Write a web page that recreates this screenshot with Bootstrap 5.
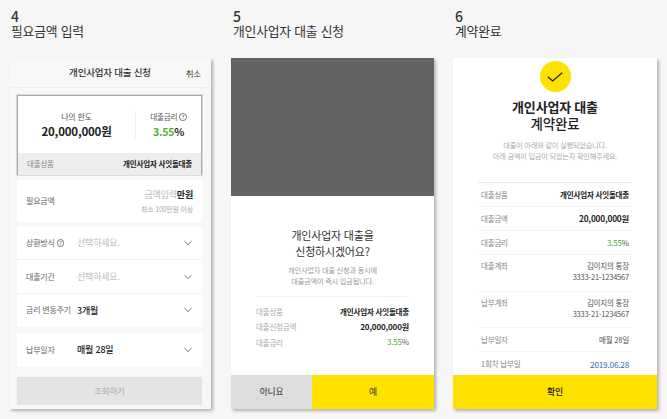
<!DOCTYPE html>
<html lang="ko">
<head>
<meta charset="utf-8">
<title>개인사업자 대출 신청</title>
<link href="https://cdn.jsdelivr.net/npm/bootstrap@5.3.0/dist/css/bootstrap.min.css" rel="stylesheet">
<style>
html,body{height:419px;overflow:hidden}
body{background:#f6f6f6;font-family:"Noto Sans CJK KR","Noto Sans",sans-serif;color:#333;letter-spacing:-.2px}
.stage{height:419px;padding:9px 10px 10px 9px;gap:20px}
.stage-col{width:203px;flex:none}
.stage-col:first-child{width:202px}
.stage-col:last-child{width:204px;margin-left:-1px}
.step-head{height:49px;font-size:12.8px;line-height:15px;padding-left:2px;color:#333}
.step-head b{font-weight:500;display:block;font-size:14px;line-height:14px}
.phone{height:351px;background:#fff;box-shadow:2px 2px 3px rgba(0,0,0,.28);overflow:hidden}
.phone-gray{background:#f7f7f7}
.top-bar{height:30px;border-bottom:1px solid #eee;font-size:9.5px;position:relative;justify-content:center;align-items:center;font-weight:500}
.top-cancel{position:absolute;right:10px;top:9px;font-size:8.5px;line-height:12px;font-weight:400}
.form-area{padding:7px 9px 0 8px}
.limit-box{height:80px;border:1px solid #a9a9a9;box-shadow:0 0 0 .5px #bbb;background:#fff;margin-bottom:5px}
.limit-top{height:57px;padding-top:14px;text-align:center}
.limit-a{width:118px;border-right:1px solid #eee;height:28px;font-size:8px;line-height:11px;color:#555;margin-top:1px}
.limit-b{flex:1;font-size:7.6px;line-height:11px;color:#555;margin-top:1px}
.limit-num{font-size:11.5px;font-weight:700;color:#222;line-height:17px;margin-top:1px}
.limit-rate{font-size:10.5px}
.limit-foot{height:22px;background:#ededed;font-size:7.5px;padding:0 9px;align-items:center;justify-content:space-between;color:#888}
.limit-foot b{color:#222;font-weight:700}
.green{color:#4fb02f}
.white-card{background:#fff;margin-bottom:5px;border-radius:1px}
.amount{height:42px;padding:0 9px;font-size:8px;color:#666;align-items:center;justify-content:space-between}
.amount-r{text-align:right;line-height:11px}
.amount-r div:first-child{font-size:9px;color:#bbb;line-height:14px}
.amount-r b{color:#222}
.amount-r div:last-child{font-size:7px;color:#aaa;line-height:11px;margin-top:2px}
.pick-group{margin-bottom:6px}
.pick{height:33.4px;padding:0 9px;align-items:center;font-size:8px;color:#666;border-bottom:1px solid #f2f2f2}
.pick:last-child{border-bottom:0}
.pick-label{width:51px;flex:none;white-space:nowrap}
.pick-val{flex:1;font-size:9px;color:#bbb}
.pick-val.on{color:#222;font-weight:500}
.chev{width:10px;height:6px;flex:none}
.qmark{display:inline-block;width:7.5px;height:7.5px;border:.7px solid #777;border-radius:50%;font-size:5.5px;line-height:6.5px;text-align:center;vertical-align:1px;letter-spacing:0}
.go-btn{height:28px;margin-top:10px;background:#e4e4e4;color:#aaa;font-size:8.5px;align-items:center;justify-content:center}
.dim{height:138px;background:#636363}
.ask{flex:1;padding-top:31px;text-align:center}
.ask-title{font-size:11px;line-height:16px;color:#333;font-weight:400}
.ask-sub{font-size:7.2px;line-height:11px;color:#999;margin-top:6px}
.ask-rows{margin:9px 25px 0;border-top:1px solid #f0f0f0;padding-top:7px;font-size:7.5px;color:#aaa}
.ask-row{height:15.3px;align-items:center;justify-content:space-between}
.ask-row b{color:#222;font-weight:700}
.ask-row span.val{color:#666;font-size:8px}
.money{font-size:8.1px}
.bottom-btns{height:34px;font-size:8.8px;color:#333;font-weight:400}
.btn-no{width:81px;background:#ddd;align-items:center;justify-content:center}
.btn-yes{flex:1;background:#ffe100;align-items:center;justify-content:center}
.tick{width:31px;height:31px;border-radius:50%;background:#ffe100;margin:3px auto 0;align-items:center;justify-content:center}
.done-title{font-size:13px;line-height:16px;text-align:center;margin-top:7px;font-weight:700;color:#222}
.done-title span{font-weight:500;display:block;font-size:13.5px}
.done-sub{font-size:7.2px;line-height:11px;color:#aaa;text-align:center;margin-top:9px}
.done-rows{margin:20px 25px 0 25px;border-top:1px solid #e6e6e6;font-size:7.5px;color:#888}
.done-row{justify-content:space-between;padding:0 3px;border-bottom:1px solid #f5f5f5;height:24px;align-items:center}
.done-row.tall{height:36.5px;align-items:flex-start;padding-top:5px;line-height:11px}
.done-row:last-child{border-bottom:0;height:24px}
.done-row b{color:#222;font-weight:700}
.done-row b.money{font-size:8.3px}
.done-row .val{color:#555;text-align:right}
.done-row .val.rate{font-size:8px}
.blue{color:#2a6cb0;font-size:8.2px}
.done-body{flex:1;overflow:hidden}
.ok-btn{height:34px;background:#ffe100;font-size:8.8px;font-weight:500;color:#222;align-items:center;justify-content:center}
</style>
</head>
<body>
<div class="stage d-flex">
  <div class="stage-col">
    <div class="step-head"><b>4</b>필요금액 입력</div>
    <div class="phone phone-gray">
      <div class="top-bar d-flex">개인사업자 대출 신청<span class="top-cancel">취소</span></div>
      <div class="form-area">
        <div class="limit-box">
          <div class="limit-top d-flex">
            <div class="limit-a">나의 한도<div class="limit-num">20,000,000원</div></div>
            <div class="limit-b">대출금리 <span class="qmark">?</span><div class="limit-num limit-rate"><span class="green">3.55</span>%</div></div>
          </div>
          <div class="limit-foot d-flex"><span>대출상품</span><b>개인사업자 사잇돌대출</b></div>
        </div>
        <div class="white-card amount d-flex">
          <span>필요금액</span>
          <div class="amount-r"><div>금액입력<b>만원</b></div><div>최소 100만원 이상</div></div>
        </div>
        <div class="white-card pick-group">
          <div class="pick d-flex"><span class="pick-label">상환방식 <span class="qmark">?</span></span><span class="pick-val">선택하세요.</span><svg class="chev" viewBox="0 0 10 6"><path d="M1.5 1.2 5 4.6l3.5-3.4" fill="none" stroke="#777" stroke-width="1"/></svg></div>
          <div class="pick d-flex"><span class="pick-label">대출기간</span><span class="pick-val">선택하세요.</span><svg class="chev" viewBox="0 0 10 6"><path d="M1.5 1.2 5 4.6l3.5-3.4" fill="none" stroke="#777" stroke-width="1"/></svg></div>
          <div class="pick d-flex"><span class="pick-label">금리 변동주기</span><span class="pick-val on">3개월</span><svg class="chev" viewBox="0 0 10 6"><path d="M1.5 1.2 5 4.6l3.5-3.4" fill="none" stroke="#777" stroke-width="1"/></svg></div>
        </div>
        <div class="white-card mb-0">
          <div class="pick d-flex"><span class="pick-label">납부일자</span><span class="pick-val on">매월 28일</span><svg class="chev" viewBox="0 0 10 6"><path d="M1.5 1.2 5 4.6l3.5-3.4" fill="none" stroke="#777" stroke-width="1"/></svg></div>
        </div>
        <div class="go-btn d-flex">조회하기</div>
      </div>
    </div>
  </div>

  <div class="stage-col">
    <div class="step-head"><b>5</b>개인사업자 대출 신청</div>
    <div class="phone d-flex flex-column">
      <div class="dim"></div>
      <div class="ask">
        <div class="ask-title">개인사업자 대출을<br>신청하시겠어요?</div>
        <div class="ask-sub">개인사업자 대출 신청과 동시에<br>대출금액이 즉시 입금됩니다.</div>
        <div class="ask-rows">
          <div class="ask-row d-flex"><span>대출상품</span><b>개인사업자 사잇돌대출</b></div>
          <div class="ask-row d-flex"><span>대출신청금액</span><b class="money">20,000,000원</b></div>
          <div class="ask-row d-flex"><span>대출금리</span><span class="val"><span class="green">3.55</span>%</span></div>
        </div>
      </div>
      <div class="bottom-btns d-flex"><div class="btn-no d-flex">아니요</div><div class="btn-yes d-flex">예</div></div>
    </div>
  </div>

  <div class="stage-col">
    <div class="step-head"><b>6</b>계약완료</div>
    <div class="phone d-flex flex-column">
      <div class="done-body">
        <div class="tick d-flex"><svg width="16" height="10" viewBox="0 0 16 10"><path d="M.8 4.8 5.6 9 15.2.8" fill="none" stroke="#222" stroke-width="1.3"/></svg></div>
        <div class="done-title">개인사업자 대출<span>계약완료</span></div>
        <div class="done-sub">대출이 아래와 같이 실행되었습니다.<br>아래 금액이 입금이 되었는지 확인해주세요.</div>
        <div class="done-rows">
          <div class="done-row d-flex"><span>대출상품</span><b>개인사업자 사잇돌대출</b></div>
          <div class="done-row d-flex"><span>대출금액</span><b class="money">20,000,000원</b></div>
          <div class="done-row d-flex"><span>대출금리</span><span class="val rate"><span class="green">3.55</span>%</span></div>
          <div class="done-row tall d-flex"><span>대출계좌</span><span class="val">김이지의 통장<br>3333-21-1234567</span></div>
          <div class="done-row tall d-flex"><span>납부계좌</span><span class="val">김이지의 통장<br>3333-21-1234567</span></div>
          <div class="done-row d-flex"><span>납부일자</span><span class="val">매월 28일</span></div>
          <div class="done-row d-flex"><span>1회차 납부일</span><span class="blue">2019.06.28</span></div>
        </div>
      </div>
      <div class="ok-btn d-flex">확인</div>
    </div>
  </div>
</div>
</body>
</html>
